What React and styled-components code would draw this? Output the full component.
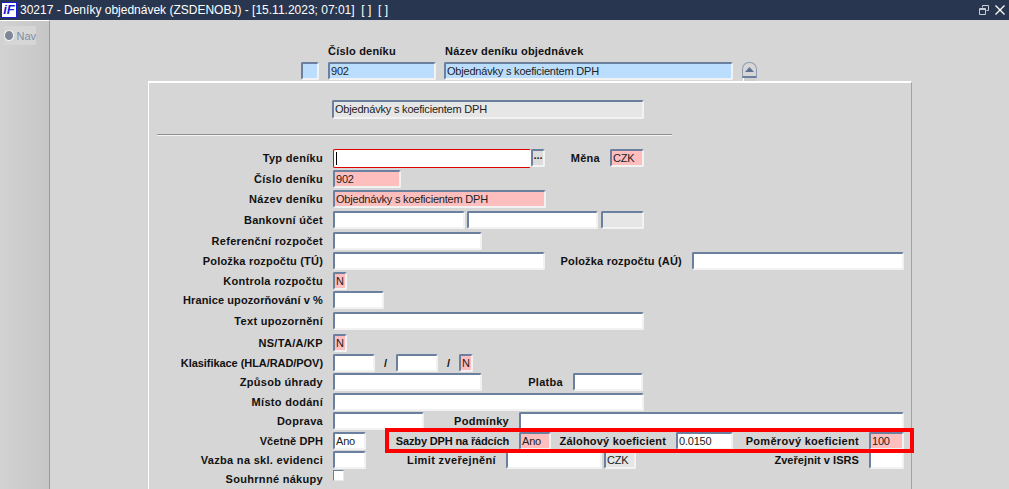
import styled, { createGlobalStyle } from "styled-components";

const GlobalStyle = createGlobalStyle`
  html, body {
    margin: 0;
    height: 100%;
    overflow: hidden;
    background: #d6d6d6;
  }
  #root {
    height: 100%;
  }
`;

const tones = {
  white: "#ffffff",
  pink: "#ffbebe",
  blue: "#bbdeff",
  grey: "#e6e6e6",
};

const Window = styled.div`
  position: relative;
  display: flex;
  flex-direction: column;
  height: 489px;
  overflow: hidden;
  font-family: "Liberation Sans", Arial, sans-serif;
  font-size: 11px;
  color: #111;
`;
const TitleBar = styled.div`
  flex: 0 0 20px;
  display: flex;
  align-items: center;
  padding-left: 1px;
  background: #28374f;
  color: #fff;
  font-size: 12px;
  white-space: pre;
`;
const Logo = styled.div`
  width: 16px;
  height: 16px;
  margin-right: 3px;
  box-sizing: border-box;
  border: 1px solid #1a1ad0;
  background: #fff;
  color: #1a1ad0;
  font: italic bold 13px/14px "Liberation Sans", Arial, sans-serif;
  text-align: center;
`;
const TitleText = styled.span`
  flex: 1;
`;
const WinIcons = styled.div`
  display: flex;
  align-items: center;
  gap: 6px;
  padding-right: 4px;
`;
const Body = styled.div`
  flex: 1;
  display: flex;
  min-height: 0;
`;
const Side = styled.div`
  flex: 0 0 45px;
  padding: 5px 0 0 4px;
  border-top: 1px solid #fff;
  border-right: 1px solid #8d9cb3;
  background: linear-gradient(90deg, #d2d2d2, #c6c6c6);
`;
const NavItem = styled.div`
  display: flex;
  align-items: center;
  gap: 2px;
  width: 32px;
  height: 19px;
  background: #d6d6d6;
  color: #7f8ea8;
`;
const Radio = styled.span`
  width: 9px;
  height: 9px;
  border-radius: 50%;
  background: #7d8797;
  border: 1px solid #f4f4f4;
`;
const Main = styled.div`
  flex: 1;
  display: flex;
  flex-direction: column;
  min-height: 0;
  padding-left: 98px;
`;
const HeadLabels = styled.div`
  flex: 0 0 auto;
  display: flex;
  height: 18px;
  padding: 24px 0 0 180px;
  font-weight: bold;
  letter-spacing: 0.2px;
  line-height: 14px;
`;
const HeadLabel = styled.span`
  width: ${(p) => p.$w}px;
`;
const HeadFields = styled.div`
  flex: 0 0 auto;
  display: flex;
  align-items: flex-start;
  height: 19px;
  padding-left: 153px;
`;
const Panel = styled.div`
  flex: 1;
  min-height: 0;
  width: 764px;
  box-sizing: border-box;
  border-top: 2px solid #fff;
  border-left: 1px solid #fff;
  border-right: 1px solid #98a4b6;
  padding-top: 17px;
`;
const TopRow = styled.div`
  display: flex;
  padding-left: 183px;
`;
const Divider = styled.div`
  width: 515px;
  height: 0;
  margin: 15px 0 13px 8px;
  border-top: 1px solid #8f8f8f;
  border-bottom: 1px solid #f4f4f4;
`;
const Row = styled.div`
  display: flex;
  align-items: flex-start;
  height: ${(p) => p.$h || 20}px;
`;
const Label = styled.label`
  flex: 0 0 auto;
  width: ${(p) => p.$w || 174}px;
  margin-right: 10px;
  text-align: right;
  font-weight: bold;
  letter-spacing: ${(p) => p.$ls ?? 0.3}px;
  line-height: 18px;
  white-space: nowrap;
`;
const Field = styled.div`
  flex: 0 0 auto;
  box-sizing: border-box;
  width: ${(p) => p.$w}px;
  height: ${(p) => p.$h || 18}px;
  margin-left: ${(p) => p.$ml || 0}px;
  padding-left: 1px;
  background: ${(p) => tones[p.$tone || "white"]};
  border: 2px solid;
  border-color: #6b7f9f #f2f2f2 #f2f2f2 #6b7f9f;
  border-radius: 2px;
  line-height: 14px;
  letter-spacing: -0.2px;
  color: #222;
  white-space: nowrap;
  overflow: hidden;
`;
const FocusField = styled(Field)`
  height: 19px;
  border: 1px solid #e00000;
  border-right-color: #fff;
  padding: 2px 0 0 2px;
`;
const Caret = styled.span`
  display: block;
  width: 1px;
  height: 13px;
  background: #000;
`;
const LovButton = styled(Field)`
  width: 14px;
  height: 18px;
  margin-left: 0;
  padding: 0;
  background: #dcdcdc;
  font-weight: bold;
  line-height: 9px;
  text-align: center;
  letter-spacing: 0;
`;
const Slash = styled.span`
  flex: 0 0 auto;
  width: ${(p) => p.$w}px;
  text-align: center;
  font-weight: bold;
  line-height: 18px;
`;
const Check = styled.div`
  width: 11px;
  height: 11px;
  box-sizing: border-box;
  background: #fff;
  border: 1px solid;
  border-color: #6b7f9f #e8e8e8 #e8e8e8 #6b7f9f;
`;
const Collapse = styled.div`
  position: relative;
  width: 15px;
  height: 16px;
  margin-left: 9px;
  box-sizing: border-box;
  display: flex;
  align-items: center;
  justify-content: center;
  border: 1px solid #8d9cb3;
  border-bottom: 2px solid #6b7f9f;
  border-radius: 7px 7px 0 0;
  background: #d6d6d6;

  &::after {
    content: "";
    position: absolute;
    left: 0;
    top: 100%;
    margin-top: 2px;
    width: 12px;
    height: 3px;
    border-left: 1px solid #fff;
    background: #cfcfcf;
  }
`;
const Highlight = styled.div`
  position: absolute;
  left: 385px;
  top: 428px;
  width: 529px;
  height: 25px;
  box-sizing: border-box;
  border: 4px solid #ff0000;
`;

export default function App() {
  return (
    <Window>
      <GlobalStyle />
      <TitleBar>
        <Logo>iF</Logo>
        <TitleText>30217 - Deníky objednávek (ZSDENOBJ) - [15.11.2023; 07:01]  [ ]  [ ]</TitleText>
        <WinIcons>
          <svg width="10" height="10" viewBox="0 0 10 10" fill="none" stroke="#c8ced8">
            <path d="M3.5 2.5V.5h6v5h-2" />
            <path d="M.5 3.5h6v6h-6zM.5 4.5h6" />
          </svg>
          <svg width="10" height="10" viewBox="0 0 10 10" fill="none" stroke="#fff" strokeWidth="1.3">
            <path d="M.5.5l9 9M9.5.5l-9 9" />
          </svg>
        </WinIcons>
      </TitleBar>
      <Body>
        <Side>
          <NavItem>
            <Radio />
            Nav
          </NavItem>
        </Side>
        <Main>
          <HeadLabels>
            <HeadLabel $w={117}>Číslo deníku</HeadLabel>
            <HeadLabel>Název deníku objednávek</HeadLabel>
          </HeadLabels>
          <HeadFields>
            <Field $w={18} $tone="blue" />
            <Field $w={108} $ml={9} $tone="blue">902</Field>
            <Field $w={289} $ml={8} $tone="blue">Objednávky s koeficientem DPH</Field>
            <Collapse>
              <svg width="9" height="5" viewBox="0 0 9 5">
                <path d="M4.5 0L9 5H0z" fill="#5f7190" />
              </svg>
            </Collapse>
          </HeadFields>
          <Panel>
            <TopRow>
              <Field $w={312} $h={19} $tone="grey">Objednávky s koeficientem DPH</Field>
            </TopRow>
            <Divider />
            <Row $h={21}>
              <Label>Typ deníku</Label>
              <FocusField $w={198}><Caret /></FocusField>
              <LovButton $w={14}>...</LovButton>
              <Label $w={55}>Měna</Label>
              <Field $w={34} $tone="pink">CZK</Field>
            </Row>
            <Row>
              <Label>Číslo deníku</Label>
              <Field $w={68} $tone="pink">902</Field>
            </Row>
            <Row $h={21}>
              <Label>Název deníku</Label>
              <Field $w={213} $tone="pink">Objednávky s koeficientem DPH</Field>
            </Row>
            <Row $h={21}>
              <Label>Bankovní účet</Label>
              <Field $w={132} />
              <Field $w={131} $ml={2} />
              <Field $w={43} $ml={3} $tone="grey" />
            </Row>
            <Row>
              <Label>Referenční rozpočet</Label>
              <Field $w={149} />
            </Row>
            <Row>
              <Label $ls={0.2}>Položka rozpočtu (TÚ)</Label>
              <Field $w={212} />
              <Label $w={137} $ls={0.2}>Položka rozpočtu (AÚ)</Label>
              <Field $w={212} />
            </Row>
            <Row $h={19}>
              <Label>Kontrola rozpočtu</Label>
              <Field $w={14} $tone="pink">N</Field>
            </Row>
            <Row $h={21}>
              <Label $ls={0.1}>Hranice upozorňování v %</Label>
              <Field $w={51} />
            </Row>
            <Row $h={22}>
              <Label>Text upozornění</Label>
              <Field $w={311} />
            </Row>
            <Row>
              <Label>NS/TA/A/KP</Label>
              <Field $w={14} $tone="pink">N</Field>
            </Row>
            <Row $h={19}>
              <Label $ls={-0.06}>Klasifikace (HLA/RAD/POV)</Label>
              <Field $w={42} />
              <Slash $w={21}>/</Slash>
              <Field $w={42} />
              <Slash $w={21}>/</Slash>
              <Field $w={14} $tone="pink">N</Field>
            </Row>
            <Row>
              <Label>Způsob úhrady</Label>
              <Field $w={149} />
              <Label $w={81}>Platba</Label>
              <Field $w={70} />
            </Row>
            <Row $h={19}>
              <Label>Místo dodání</Label>
              <Field $w={311} />
            </Row>
            <Row>
              <Label>Doprava</Label>
              <Field $w={91} />
              <Label $w={85}>Podmínky</Label>
              <Field $w={385} />
            </Row>
            <Row $h={19}>
              <Label $ls={0.1}>Včetně DPH</Label>
              <Field $w={33}>Ano</Field>
              <Label $w={143} $ls={-0.15}>Sazby DPH na řádcích</Label>
              <Field $w={32} $tone="pink">Ano</Field>
              <Label $w={115} $ls={0.2}>Zálohový koeficient</Label>
              <Field $w={57}>0.0150</Field>
              <Label $w={126}>Poměrový koeficient</Label>
              <Field $w={35} $tone="pink">100</Field>
            </Row>
            <Row $h={19}>
              <Label>Vazba na skl. evidenci</Label>
              <Field $w={33} />
              <Label $w={130} $ls={0.36}>Limit zveřejnění</Label>
              <Field $w={96} />
              <Field $w={32} $ml={2} $tone="grey">CZK</Field>
              <Label $w={223} $ls={0.05}>Zveřejnit v ISRS</Label>
              <Field $w={35} />
            </Row>
            <Row>
              <Label>Souhrnné nákupy</Label>
              <Check />
            </Row>
          </Panel>
        </Main>
      </Body>
      <Highlight />
    </Window>
  );
}
